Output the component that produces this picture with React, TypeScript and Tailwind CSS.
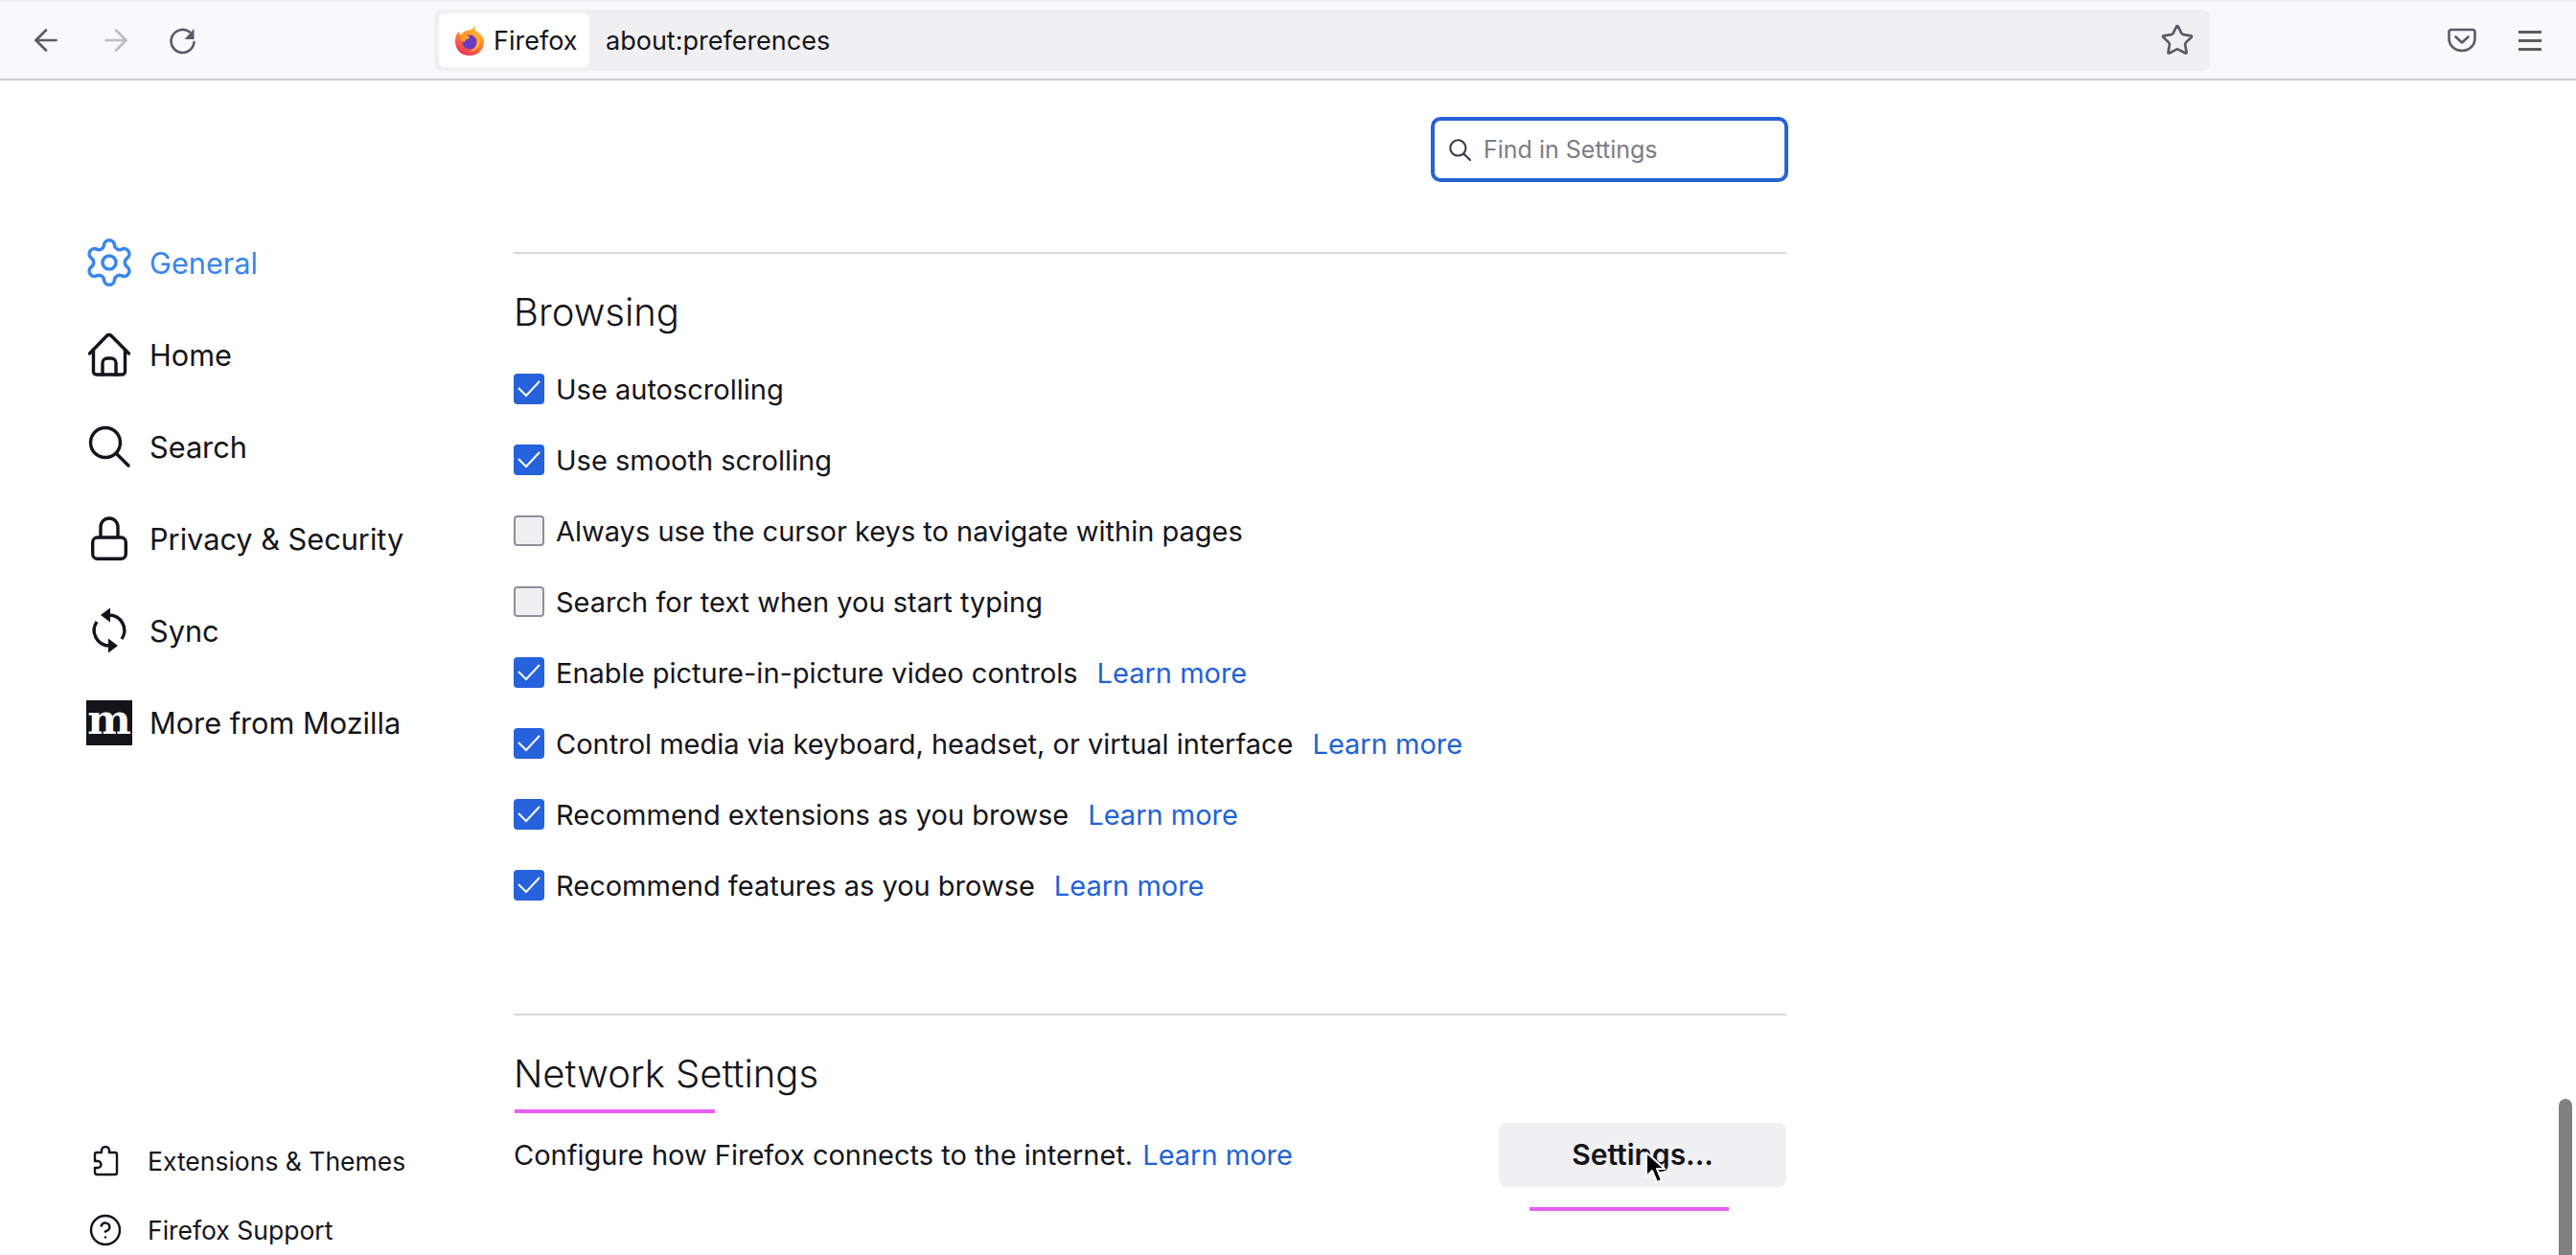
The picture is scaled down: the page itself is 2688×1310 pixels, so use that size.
import { ArrowLeft, ArrowRight, CircleHelp, Settings, Star } from "lucide-react";
import type { ReactNode } from "react";

const FirefoxLogo = () => (
  <svg width="30" height="32" viewBox="0 0 30 32">
    <defs>
      <linearGradient id="ffBody" x1="0.8" y1="0" x2="0.3" y2="1">
        <stop offset="0" stopColor="#ffd23c" />
        <stop offset="0.45" stopColor="#ff8a2a" />
        <stop offset="1" stopColor="#f0305c" />
      </linearGradient>
    </defs>
    <path d="M20 0c1 3 0 5 3 7 4 3 7 6 7 10 0 9-6 15-15 15S0 26 0 17c0-4 1-8 4-10 0 2 1 3 2 4 1-3 4-5 7-5 3-1 7-2 7-6z" fill="url(#ffBody)" />
    <circle cx="15" cy="18" r="7.5" fill="#6a3bc4" />
    <path d="M5 10c3-1 6 0 8 1 2 1 3 3 0 4-2 0-3 1-3 3-3 0-5-3-5-8z" fill="#ff9a2e" />
    <path d="M22 8c4 4 5 10 2 15-2 3-6 5-10 5 5-2 9-5 9-11 0-3 0-6-1-9z" fill="#ffb02e" />
  </svg>
);

const ReloadIcon = () => (
  <svg width="30" height="30" viewBox="0 0 30 30" fill="none">
    <path d="M22 6.5A12 12 0 1 0 26.5 17" stroke="#5b5b66" strokeWidth="2.6" strokeLinecap="round" />
    <path d="M26.5 3v11h-10z" fill="#5b5b66" />
  </svg>
);

const PocketIcon = () => (
  <svg width="30" height="26" viewBox="0 0 30 26" fill="none" stroke="#5b5b66" strokeWidth="2.6" strokeLinecap="round" strokeLinejoin="round">
    <path d="M4 2h22a2.5 2.5 0 0 1 2.5 2.5V11c0 7.5-6 13-13.5 13S1.5 18.5 1.5 11V4.5A2.5 2.5 0 0 1 4 2z" />
    <path d="M8.5 9.5l6.5 6 6.5-6" />
  </svg>
);

const HomeIcon = () => (
  <svg width="46" height="46" viewBox="0 0 46 46" fill="none" stroke="#15141a" strokeWidth="3.4" strokeLinecap="round" strokeLinejoin="round">
    <path d="M2.5 22L20.5 3.5a3.2 3.2 0 0 1 4.6 0L43.5 22" />
    <path d="M6.5 18V41a3 3 0 0 0 3 3h27a3 3 0 0 0 3-3V18" />
    <path d="M16 44V32a5 5 0 0 1 5-5h4a5 5 0 0 1 5 5v12" />
  </svg>
);

const SearchIcon = ({ size, color, strokeWidth }: { size: number; color: string; strokeWidth: number }) => (
  <svg width={size} height={size} viewBox="0 0 44 44" fill="none" stroke={color} strokeWidth={strokeWidth} strokeLinecap="round">
    <circle cx="18" cy="18" r="15.5" />
    <path d="M29.5 29.5L42 42" />
  </svg>
);

const LockIcon = () => (
  <svg width="38" height="46" viewBox="0 0 38 46" fill="none" stroke="#15141a" strokeWidth="3.4">
    <rect x="1.7" y="22" width="34.6" height="22.3" rx="5" />
    <path d="M10 22V11a9 9 0 0 1 18 0v11" />
  </svg>
);

const SyncIcon = () => (
  <svg width="48" height="48" viewBox="0 0 48 48" fill="none">
    <path d="M24 8A16 16 0 0 1 37 33" stroke="#15141a" strokeWidth="3.4" />
    <path d="M24 40A16 16 0 0 1 11 15" stroke="#15141a" strokeWidth="3.4" />
    <path d="M15 8L25 0.5V15.5z" fill="#15141a" />
    <path d="M33 40L23 32.5V47.5z" fill="#15141a" />
  </svg>
);

const MozillaIcon = () => (
  <div className="w-[48px] h-[47px] bg-[#15141a] text-white flex items-center justify-center font-['DejaVu_Serif',serif] font-bold text-[43px] leading-[47px]">
    <span className="-mt-[5px]">m</span>
  </div>
);

const PuzzleIcon = () => (
  <svg width="28" height="32" viewBox="0 0 28 32" fill="none" stroke="#15141a" strokeWidth="2.4" strokeLinejoin="round">
    <path d="M10 7V5a4 4 0 0 1 8 0v2h6a2 2 0 0 1 2 2v19a2 2 0 0 1-2 2H5a2 2 0 0 1-2-2v-5h3a3.5 3.5 0 0 0 0-7H3V9a2 2 0 0 1 2-2z" />
  </svg>
);

const CursorIcon = () => (
  <svg width="24" height="36" viewBox="0 0 24 36" className="absolute left-[1716px] top-[1201px]">
    <path d="M2 2v25l6-6 5 12 5-2-5-12h8z" fill="#000" stroke="#fff" strokeWidth="2" strokeLinejoin="round" />
  </svg>
);

const NavItem = ({ icon, label, active = false }: { icon: ReactNode; label: string; active?: boolean }) => (
  <div className={`flex items-center h-[96px] pl-[90px] text-[30.7px] ${active ? "text-[#3a86ee]" : "text-[#15141a]"}`}>
    <div className="w-[48px] flex justify-center">{icon}</div>
    <span className="ml-[18px] pt-[2px]">{label}</span>
  </div>
);

const FooterItem = ({ icon, label }: { icon: ReactNode; label: string }) => (
  <div className="flex items-center h-[72px] pl-[92px] text-[26.5px] text-[#15141a]">
    <div className="w-[36px] flex justify-center">{icon}</div>
    <span className="ml-[26px] pt-[2px]">{label}</span>
  </div>
);

const LearnMore = () => <span className="text-[#1f62d9] ml-[20px]">Learn more</span>;

const CheckRow = ({ checked, label, learn = false }: { checked: boolean; label: string; learn?: boolean }) => (
  <div className="flex items-center h-[74px]">
    {checked ? (
      <div className="w-[32px] h-[32px] rounded-[4px] bg-[#2562dc] flex items-center justify-center">
        <svg width="26" height="20" viewBox="0 0 26 20" fill="none" stroke="#fff" strokeWidth="2">
          <path d="M2 9l8 8L24 2" />
        </svg>
      </div>
    ) : (
      <div className="w-[32px] h-[32px] rounded-[4px] bg-[#f0f0f2] border-2 border-[#8f8f9d]" />
    )}
    <div className="ml-[12px] pt-[1px] flex">
      <span>{label}</span>
      {learn && <LearnMore />}
    </div>
  </div>
);

export default function App() {
  return (
    <div className="relative w-[2688px] h-[1310px] overflow-hidden bg-white font-['Inter',sans-serif] text-[#15141a]">
      <div className="h-[84px] bg-[#f9f9fb] border-t-2 border-t-[#ececf0] border-b-2 border-b-[#cfcfd3] flex items-center">
        <div className="flex items-center w-[453px] pl-[30px] gap-[37px]">
          <ArrowLeft size={36} color="#5b5b66" strokeWidth={1.8} />
          <ArrowRight size={36} color="#bdbdc2" strokeWidth={1.8} />
          <ReloadIcon />
        </div>
        <div className="w-[1853px] h-[64px] bg-[#f0f0f2] rounded-[8px] flex items-center pl-[5px] pr-[16px] text-[27px]">
          <div className="w-[157px] h-[56px] bg-white rounded-[6px] flex items-center pl-[17px]">
            <FirefoxLogo />
            <span className="ml-[10px] pt-[2px]">Firefox</span>
          </div>
          <span className="ml-[17px] pt-[2px]">about:preferences</span>
          <Star size={36} color="#5b5b66" strokeWidth={1.8} className="ml-auto" />
        </div>
        <div className="ml-[248px]"><PocketIcon /></div>
        <div className="ml-[44px] w-[24px] flex flex-col gap-[6px]">
          <div className="h-[3px] bg-[#5b5b66]" />
          <div className="h-[3px] bg-[#5b5b66]" />
          <div className="h-[3px] bg-[#5b5b66]" />
        </div>
      </div>

      <div className="flex">
        <div className="w-[536px] pt-[142px]">
          <NavItem active icon={<Settings size={56} strokeWidth={1.5} className="shrink-0" />} label="General" />
          <NavItem icon={<HomeIcon />} label="Home" />
          <NavItem icon={<SearchIcon size={44} color="#15141a" strokeWidth={3.4} />} label="Search" />
          <NavItem icon={<LockIcon />} label="Privacy & Security" />
          <NavItem icon={<SyncIcon />} label="Sync" />
          <NavItem icon={<MozillaIcon />} label="More from Mozilla" />
          <div className="mt-[374px]">
            <FooterItem icon={<PuzzleIcon />} label="Extensions & Themes" />
            <FooterItem icon={<CircleHelp size={36} strokeWidth={1.6} />} label="Firefox Support" />
          </div>
        </div>

        <div className="w-[1328px] text-[29px]">
          <div className="mt-[38px] -mr-[2px] flex justify-end">
            <div className="w-[373px] h-[68px] border-[4px] border-[#2562d6] rounded-[10px] flex items-center pl-[15px] text-[25px] text-[#7c7c85]">
              <SearchIcon size={23} color="#3a3a42" strokeWidth={4} />
              <span className="ml-[13px] pt-[1px]">Find in Settings</span>
            </div>
          </div>

          <div className="mt-[73px] h-[2px] bg-[#d7d7db]" />
          <h2 className="mt-[38px] mb-[20px] text-[40px] leading-[46px] font-light">Browsing</h2>
          <CheckRow checked label="Use autoscrolling" />
          <CheckRow checked label="Use smooth scrolling" />
          <CheckRow checked={false} label="Always use the cursor keys to navigate within pages" />
          <CheckRow checked={false} label="Search for text when you start typing" />
          <CheckRow checked learn label="Enable picture-in-picture video controls" />
          <CheckRow checked learn label="Control media via keyboard, headset, or virtual interface" />
          <CheckRow checked learn label="Recommend extensions as you browse" />
          <CheckRow checked learn label="Recommend features as you browse" />

          <div className="mt-[97px] h-[2px] bg-[#d7d7db]" />
          <h2 className="mt-[38px] text-[40px] leading-[46px] font-light">Network Settings</h2>
          <div className="mt-[14px] ml-[1px] w-[209px] h-[4px] bg-[#e85ff5]" />
          <div className="mt-[10px] flex items-center justify-between h-[67px]">
            <div className="pt-[1px]">
              Configure how Firefox connects to the internet.
              <span className="text-[#1f62d9] ml-[10px]">Learn more</span>
            </div>
            <div className="w-[300px] h-[67px] rounded-[8px] bg-[#f0f0f2] flex items-center justify-center font-semibold text-[30px]">Settings...</div>
          </div>
        </div>
      </div>

      <div className="absolute left-[1596px] top-[1260px] w-[208px] h-[4px] bg-[#e85ff5]" />
      <CursorIcon />
      <div className="absolute left-[2670px] top-[1147px] w-[14px] h-[180px] rounded-full bg-[#808080]" />
    </div>
  );
}
